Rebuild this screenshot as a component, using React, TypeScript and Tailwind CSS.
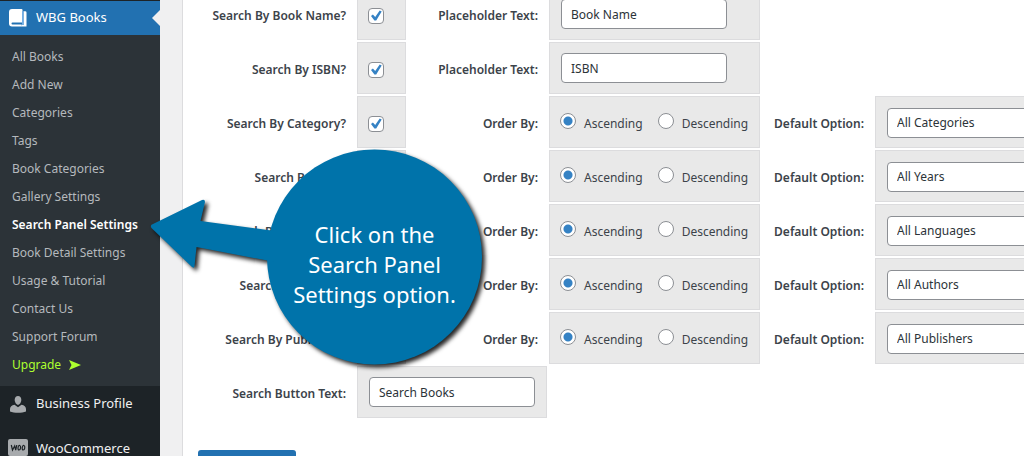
import { Fragment } from 'react';

const menuItems = [
    'All Books',
    'Add New',
    'Categories',
    'Tags',
    'Book Categories',
    'Gallery Settings',
    'Search Panel Settings',
    'Book Detail Settings',
    'Usage & Tutorial',
    'Contact Us',
    'Support Forum',
];

const textRows = [
    { id: 'name', label: 'Search By Book Name?', value: 'Book Name' },
    { id: 'isbn', label: 'Search By ISBN?', value: 'ISBN' },
];

const orderRows = [
    { id: 'category', label: 'Search By Category?', option: 'All Categories' },
    { id: 'year', label: 'Search By Year?', option: 'All Years' },
    { id: 'language', label: 'Search By Language?', option: 'All Languages' },
    { id: 'author', label: 'Search By Author?', option: 'All Authors' },
    { id: 'publisher', label: 'Search By Publisher?', option: 'All Publishers' },
];

const headCell = 'px-[9px] pt-[3px] text-right font-semibold whitespace-nowrap text-[#3c434a]';
const bodyCell = 'h-[52px] border border-[#dcdcde] bg-[#e9e9e9] px-[10px]';
const field = 'mx-px block h-[30px] rounded border border-[#8c8f94] bg-white px-[9px] text-xs text-[#2c3338]';

const Sidebar = () => (
    <aside className="w-40 shrink-0 bg-[#1d2327] pt-px text-[13px] text-[#f0f0f1]">
        <a href="#books" className="flex h-[34px] items-center justify-between bg-[#2271b1] pl-[9px] text-white">
            <span className="flex items-center gap-[9px]">
                <svg viewBox="0 0 18 18" className="size-[18px]" fill="currentColor">
                    <path d="M3 0h9.500a1 1 0 0 1 1 1v12.500H3.500a1 1 0 0 0 0 2h9.200v2H3a3 3 0 0 1-3-3V3a3 3 0 0 1 3-3z" />
                    <path d="M13.500 2.200h2.700a1.300 1.300 0 0 1 1.300 1.300V17.500h-5V16h2V2.200z" />
                    <path d="M13 2.200h1.500V16H13z" fill="#72aee6" />
                </svg>
                WBG Books
            </span>
            <svg viewBox="0 0 8 16" className="h-4 w-2" fill="#f0f0f1">
                <path d="M8 0v16L0 8z" />
            </svg>
        </a>
        <ul className="bg-[#2c3338] pt-2 pb-[7px] text-xs text-[#b5b9bd]">
            {menuItems.map((item) => (
                <li key={item}>
                    <a
                        href="#menu"
                        className={
                            item === 'Search Panel Settings'
                                ? 'flex h-7 items-center pl-3 font-semibold whitespace-nowrap text-white'
                                : 'flex h-7 items-center pl-3 whitespace-nowrap'
                        }
                    >
                        {item}
                    </a>
                </li>
            ))}
            <li>
                <a href="#upgrade" className="flex h-7 items-center gap-2 pl-3 text-[#adff2f]">
                    Upgrade
                    <svg viewBox="0 0 12 10" className="h-[10px] w-3" fill="currentColor">
                        <path d="M0 0l12 5-12 5 2.500-5z" />
                    </svg>
                </a>
            </li>
        </ul>
        <a href="#profile" className="flex h-9 items-center gap-[10px] pl-[10px]">
            <svg viewBox="0 0 16 17" className="h-[17px] w-4" fill="#a7aaad">
                <path d="M8 0c2 0 3.300 1.400 3.300 3.700S9.800 8.800 8 8.800 4.700 6 4.700 3.700 6 0 8 0z" />
                <path d="M4.500 8.700L8 11.200l3.500-2.500c2.800.6 4.500 2 4.500 4.300V15.500c-2 1-5 1.300-8 1.300S2 16.500 0 15.500v-2.500c0-2.300 1.700-3.700 4.500-4.300z" />
            </svg>
            Business Profile
        </a>
        <a href="#woo" className="mt-[9px] flex h-9 items-center gap-2 pl-2">
            <svg viewBox="0 0 20 20" className="size-5" fill="none">
                <path d="M2 0h16a2 2 0 0 1 2 2v13a2 2 0 0 1-2 2h-5l1 3-5-3H2a2 2 0 0 1-2-2V2a2 2 0 0 1 2-2z" fill="#a7aaad" />
                <path
                    d="M3.300 6l1.200 5L6.700 7l1 4.200L8.800 6M11.700 6.500c-1.800-.5-2.400 4.500-.7 4.500s2.200-4 .7-4.500zM15.900 6.500c-1.800-.5-2.400 4.500-.7 4.500s2.200-4 .7-4.500z"
                    stroke="#1d2327"
                    strokeWidth="1.200"
                />
            </svg>
            WooCommerce
        </a>
    </aside>
);

const EnabledCells = ({ id, label }: { id: string; label: string }) => (
    <Fragment>
        <th scope="row" className={headCell}>
            <label htmlFor={`search-${id}`}>{label}</label>
        </th>
        <td className={bodyCell}>
            <span className="grid w-4 pt-1">
                <input
                    id={`search-${id}`}
                    type="checkbox"
                    defaultChecked
                    className="peer col-start-1 row-start-1 size-4 appearance-none rounded border border-[#8c8f94] bg-white"
                />
                <svg viewBox="0 0 16 16" className="pointer-events-none invisible col-start-1 row-start-1 size-4 peer-checked:visible" fill="#3582c4">
                    <path d="M11.700 2.500L13.700 3.600 8.200 12.500H6.400L3 7.900l1.900-1.300 2.300 2.300z" />
                </svg>
            </span>
        </td>
    </Fragment>
);

const OrderRadio = ({ id, label, checked }: { id: string; label: string; checked: boolean }) => (
    <label className="flex items-center gap-2">
        <input
            type="radio"
            name={`order-${id}`}
            defaultChecked={checked}
            className="mb-[5px] size-4 appearance-none rounded-full border border-[#8c8f94] bg-white checked:bg-[radial-gradient(circle,#3582c4_4px,white_5px)]"
        />
        {label}
    </label>
);

const SettingsForm = () => (
    <form className="min-h-screen min-w-0 flex-1 border-l border-[#dcdcde] bg-white pl-[15px]">
        {/* the page is scrolled part of the way into the first row */}
        <table className="-mt-[14px] w-full min-w-[910px] table-fixed border-separate border-spacing-[2px] text-xs text-[#3c434a]">
            <colgroup>
                <col className="w-[155px]" />
                <col className="w-[49px]" />
                <col className="w-[139px]" />
                <col className="w-[211px]" />
                <col className="w-[111px]" />
                <col />
            </colgroup>
            <tbody>
                {textRows.map(({ id, label, value }) => (
                    <tr key={id}>
                        <EnabledCells id={id} label={label} />
                        <th scope="row" className={headCell}>
                            <label htmlFor={`placeholder-${id}`}>Placeholder Text:</label>
                        </th>
                        <td className={bodyCell}>
                            <input id={`placeholder-${id}`} type="text" defaultValue={value} className={`${field} w-[166px]`} />
                        </td>
                    </tr>
                ))}
                {orderRows.map(({ id, label, option }) => (
                    <tr key={id}>
                        <EnabledCells id={id} label={label} />
                        <th scope="row" className={headCell}>
                            Order By:
                        </th>
                        <td className={bodyCell}>
                            <div className="flex gap-[15px] pt-[3px]">
                                <OrderRadio id={id} label="Ascending" checked />
                                <OrderRadio id={id} label="Descending" checked={false} />
                            </div>
                        </td>
                        <th scope="row" className={headCell}>
                            <label htmlFor={`default-${id}`}>Default Option:</label>
                        </th>
                        <td className={bodyCell}>
                            <select id={`default-${id}`} className={`${field} mt-0.5 w-[190px] appearance-none`}>
                                <option>{option}</option>
                            </select>
                        </td>
                    </tr>
                ))}
                <tr>
                    <th scope="row" className={headCell}>
                        <label htmlFor="button-text">Search Button Text:</label>
                    </th>
                    <td colSpan={2} className={bodyCell}>
                        <input id="button-text" type="text" defaultValue="Search Books" className={`${field} w-[166px]`} />
                    </td>
                </tr>
            </tbody>
        </table>
        <button
            type="button"
            aria-label="Save Settings"
            className="mt-[30px] h-[30px] w-[98px] rounded-[3px] bg-[#2271b1]"
        />
    </form>
);

// Help bubble floating over the page, its arrow ending at the menu item
const HelpBubble = () => (
    <div className="pointer-events-none absolute top-[145px] left-[145px] h-[230px] w-[345px]">
        <svg viewBox="0 0 345 230" className="size-full drop-shadow-[3px_3px_2px_rgba(0,0,0,0.85)]" fill="#0073aa">
            <circle cx="229.500" cy="112" r="107.500" />
            <path d="M6 80.500Q6 79.500 8 79L57 55Q60 54 60 57L55.500 76l74.500 10v31L51.500 102 49.500 121Q49 124 46.500 121.500L7 83.500Q5.500 82 6 80.500z" />
        </svg>
        <p className="absolute top-[74px] left-[122px] w-[215px] text-center text-[22px] leading-[30px] text-white">
            Click on the
            <br />
            Search Panel
            <br />
            Settings option.
        </p>
    </div>
);

export default function App() {
    return (
        <div className="relative flex h-screen overflow-hidden bg-[#f0f0f1] font-['Noto_Sans','Open_Sans',sans-serif]">
            <Sidebar />
            <main className="flex min-w-0 flex-1 pl-[22px]">
                <SettingsForm />
            </main>
            <HelpBubble />
        </div>
    );
}
